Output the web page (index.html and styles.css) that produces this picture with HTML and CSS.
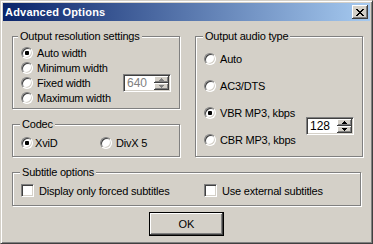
FILE: index.html
```html
<!DOCTYPE html>
<html lang="en">
<head>
    <meta charset="UTF-8">
    <title>Advanced Options</title>
    <link rel="stylesheet" href="styles.css">
</head>
<body>
<div class="window">
    <div class="titlebar">
        <span class="title">Advanced Options</span>
        <button class="close" title="Close">
            <svg width="8" height="7" viewBox="0 0 8 7" shape-rendering="crispEdges">
                <path d="M0 0h2v1H0zM6 0h2v1H6zM1 1h2v1H1zM5 1h2v1H5zM2 2h4v1H2zM3 3h2v1H3zM2 4h4v1H2zM1 5h2v1H1zM5 5h2v1H5zM0 6h2v1H0zM6 6h2v1H6z"/>
            </svg>
        </button>
    </div>
    <div class="content">
        <div class="columns">
            <div class="col">
                <fieldset class="group group-res">
                    <legend>Output resolution settings</legend>
                    <label class="opt"><input type="radio" name="res" checked>Auto width</label>
                    <label class="opt"><input type="radio" name="res">Minimum width</label>
                    <div class="opt-row">
                        <label class="opt"><input type="radio" name="res">Fixed width</label>
                        <div class="spin disabled">
                            <span class="spin-value">640</span>
                            <span class="spin-btns">
                                <span class="spin-btn"><svg width="5" height="3" viewBox="0 0 5 3" shape-rendering="crispEdges"><path d="M2 0h1v1h1v1h1v1H0V2h1V1h1z"/></svg></span>
                                <span class="spin-btn"><svg width="5" height="3" viewBox="0 0 5 3" shape-rendering="crispEdges"><path d="M0 0h5v1H4v1H3v1H2V2H1V1H0z"/></svg></span>
                            </span>
                        </div>
                    </div>
                    <label class="opt"><input type="radio" name="res">Maximum width</label>
                </fieldset>
                <fieldset class="group group-codec">
                    <legend>Codec</legend>
                    <div class="codec-row">
                        <label class="opt opt-xvid"><input type="radio" name="codec" checked>XviD</label>
                        <label class="opt"><input type="radio" name="codec">DivX 5</label>
                    </div>
                </fieldset>
            </div>
            <fieldset class="group group-audio">
                <legend>Output audio type</legend>
                <div class="audio-grid">
                    <label class="opt"><input type="radio" name="audio">Auto</label>
                    <label class="opt"><input type="radio" name="audio">AC3/DTS</label>
                    <label class="opt"><input type="radio" name="audio" checked>VBR MP3, kbps</label>
                    <label class="opt"><input type="radio" name="audio">CBR MP3, kbps</label>
                    <div class="spin spin-audio">
                        <span class="spin-value">128</span>
                        <span class="spin-btns">
                            <span class="spin-btn"><svg width="5" height="3" viewBox="0 0 5 3" shape-rendering="crispEdges"><path d="M2 0h1v1h1v1h1v1H0V2h1V1h1z"/></svg></span>
                            <span class="spin-btn"><svg width="5" height="3" viewBox="0 0 5 3" shape-rendering="crispEdges"><path d="M0 0h5v1H4v1H3v1H2V2H1V1H0z"/></svg></span>
                        </span>
                    </div>
                </div>
            </fieldset>
        </div>
        <fieldset class="group group-subs">
            <legend>Subtitle options</legend>
            <div class="subs-row">
                <label class="opt opt-check"><input type="checkbox">Display only forced subtitles</label>
                <label class="opt opt-check"><input type="checkbox">Use external subtitles</label>
            </div>
        </fieldset>
        <div class="actions">
            <button class="btn default">OK</button>
        </div>
    </div>
</div>
</body>
</html>
```

FILE: styles.css
```css
body {
  margin: 0;
  background: #d4d0c8;
  font-family: "Liberation Sans", Arial, sans-serif;
  font-size: 11px;
  color: #000;
}

.window {
  width: 373px;
  height: 244px;
  box-sizing: border-box;
  padding: 2px;
  background: #d4d0c8;
  border: 1px solid;
  border-color: #d4d0c8 #404040 #404040 #d4d0c8;
  box-shadow: inset 1px 1px 0 #fff, inset -1px -1px 0 #808080;
}

.titlebar {
  height: 18px;
  display: flex;
  align-items: center;
  justify-content: space-between;
  padding: 0 2px;
  background: linear-gradient(to right, #0a246a, #a6caf0);
}
.title {
  color: #fff;
  font-weight: bold;
  line-height: 18px;
  letter-spacing: 0.2px;
}
.close {
  width: 16px;
  height: 14px;
  padding: 0;
  border: 0;
  display: flex;
  align-items: center;
  justify-content: center;
  background: #d4d0c8;
  box-shadow: inset -1px -1px 0 #404040, inset 1px 1px 0 #fff, inset -2px -2px 0 #808080;
}

.content {
  padding: 9px 9px 0;
  letter-spacing: -0.2px;
}

.columns {
  display: grid;
  grid-template-columns: 168px 168px;
  column-gap: 15px;
}
.col {
  display: flex;
  flex-direction: column;
  gap: 9px;
}

.group {
  margin: 0;
  padding: 0 8px;
  min-width: 0;
  border: 1px solid #808080;
  box-shadow: 1px 1px 0 #fff, inset 1px 1px 0 #fff;
}
.group legend {
  margin-left: -1px;
  padding: 0 2px;
  line-height: 13px;
  background: #d4d0c8;
}
.group-res legend {
  margin-left: -3px;
}

.group-res {
  padding: 2px 8px 3px;
}
.group-codec {
  padding: 4px 8px 6px;
}
.group-audio {
  padding: 8px 8px 0;
}
.group-subs {
  margin-top: 9px;
  padding: 4px 8px 7px;
}

.opt {
  display: flex;
  align-items: center;
  gap: 4px;
  height: 15px;
  white-space: nowrap;
}
.opt-row {
  display: flex;
  align-items: center;
  justify-content: space-between;
  height: 15px;
}
.codec-row {
  display: flex;
}
.opt-xvid {
  width: 79px;
  gap: 2px;
}

.audio-grid {
  display: grid;
  grid-template-columns: 1fr auto;
  grid-auto-rows: 15px;
  row-gap: 12px;
}
.audio-grid .opt {
  grid-column: 1;
}
.spin-audio {
  grid-column: 2;
  grid-row: 3 / span 2;
  align-self: center;
}

.subs-row {
  display: grid;
  grid-template-columns: 183px 1fr;
}
.opt-check {
  gap: 5px;
}

input[type=radio] {
  appearance: none;
  margin: 0;
  width: 12px;
  height: 12px;
  flex: none;
  border-radius: 50%;
  border: 1px solid;
  border-color: #808080 #fff #fff #808080;
  box-shadow: inset 1px 1px 0 #404040, inset -1px -1px 0 #d4d0c8;
  background: #fff;
}
input[type=radio]:checked {
  background: radial-gradient(circle, #000 0, #000 2px, #fff 2.5px);
}

input[type=checkbox] {
  appearance: none;
  margin: 0;
  width: 13px;
  height: 13px;
  flex: none;
  border: 1px solid;
  border-color: #808080 #fff #fff #808080;
  box-shadow: inset 1px 1px 0 #404040, inset -1px -1px 0 #d4d0c8;
  background: #fff;
}

.spin {
  display: flex;
  width: 48px;
  height: 18px;
  box-sizing: border-box;
  padding: 1px;
  border: 1px solid;
  border-color: #808080 #fff #fff #808080;
  box-shadow: inset 1px 1px 0 #404040, inset -1px -1px 0 #d4d0c8;
  background: #fff;
}
.spin-value {
  flex: 1;
  padding-left: 2px;
  line-height: 14px;
  font-size: 12px;
  letter-spacing: 0;
}
.spin.disabled .spin-value {
  color: #808080;
}
.spin-btns {
  width: 15px;
  display: flex;
  flex-direction: column;
}
.spin-btn {
  flex: 1;
  display: flex;
  align-items: center;
  justify-content: center;
  background: #d4d0c8;
  box-shadow: inset -1px -1px 0 #404040, inset 1px 1px 0 #fff, inset -2px -2px 0 #808080;
}
.spin.disabled .spin-btn svg {
  fill: #808080;
}

.actions {
  display: flex;
  justify-content: center;
  margin-top: 6px;
}
.btn {
  width: 75px;
  height: 24px;
  padding: 0;
  font: inherit;
  color: #000;
  background: #d4d0c8;
  border: 1px solid #000;
  box-shadow: inset -1px -1px 0 #404040, inset 1px 1px 0 #fff, inset -2px -2px 0 #808080;
}
```
